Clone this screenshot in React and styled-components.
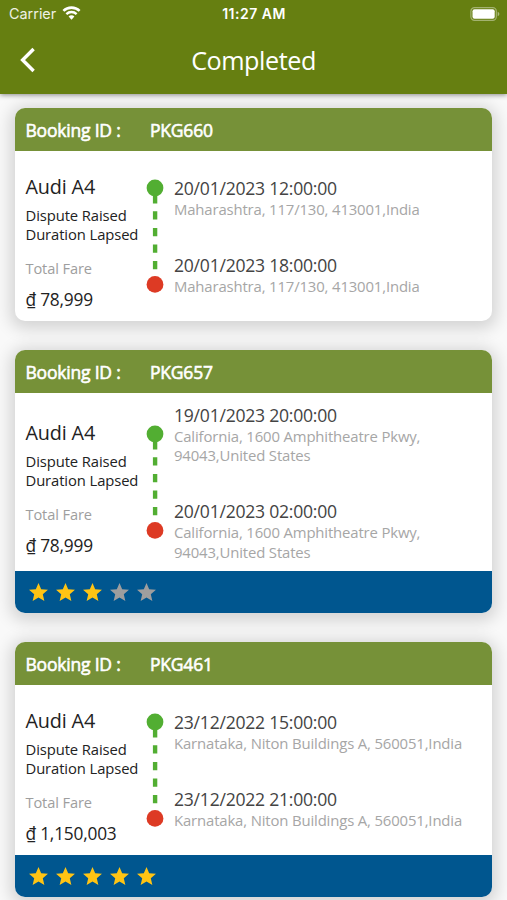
import React from "react";
import styled, { createGlobalStyle } from "styled-components";

const bookings = [
  {
    id: "PKG660",
    car: "Audi A4",
    fare: "78,999",
    address: "Maharashtra, 117/130, 413001,India",
    start: "20/01/2023 12:00:00",
    end: "20/01/2023 18:00:00",
  },
  {
    id: "PKG657",
    car: "Audi A4",
    fare: "78,999",
    address: "California, 1600 Amphitheatre Pkwy, 94043,United States",
    start: "19/01/2023 20:00:00",
    end: "20/01/2023 02:00:00",
    rating: 3,
    tall: true,
  },
  {
    id: "PKG461",
    car: "Audi A4",
    fare: "1,150,003",
    address: "Karnataka, Niton Buildings A, 560051,India",
    start: "23/12/2022 15:00:00",
    end: "23/12/2022 21:00:00",
    rating: 5,
  },
];

const WifiIcon = () => (
  <svg width="19" height="14" viewBox="0 0 20 15">
    <path d="M1.3 5.3a12.4 12.4 0 0 1 17.4 0" fill="none" stroke="#fff" strokeWidth="2.7" />
    <path d="M4.5 8.7a7.9 7.9 0 0 1 11 0" fill="none" stroke="#fff" strokeWidth="2.5" />
    <path d="M10 14.6 6.9 11.3a4.3 4.3 0 0 1 6.2 0Z" fill="#fff" />
  </svg>
);

const BatteryIcon = () => (
  <svg width="31" height="14" viewBox="0 0 31 14">
    <rect x="0.9" y="0.7" width="25.4" height="12.6" rx="3.6" fill="none" stroke="#fff" strokeOpacity="0.4" strokeWidth="1.2" />
    <rect x="2.5" y="2.3" width="22.2" height="9.4" rx="2" fill="#fff" />
    <path d="M27.7 4.8c2.2.8 2.2 3.6 0 4.4Z" fill="#fff" fillOpacity="0.45" />
  </svg>
);

const BackIcon = () => (
  <svg width="17" height="26" viewBox="0 0 17 26">
    <path d="M14.6 2 3.6 13l11 11" fill="none" stroke="#fff" strokeWidth="3.4" />
  </svg>
);

const Star = ({ filled }) => (
  <svg width="19" height="18" viewBox="2 2 20 19">
    <path
      d="M12 17.27 18.18 21l-1.64-7.03L22 9.24l-7.19-.61L12 2 9.19 8.63 2 9.24l5.46 4.73L5.82 21z"
      fill={filled ? "#ffc414" : "#9e9e9e"}
    />
  </svg>
);

const Route = () => (
  <svg width="18" height="114" viewBox="0 0 18 114">
    <path d="M9.1 9V24.4M9.1 32.3v8.2M9.1 49v8.2M9.1 65.5v8.2M9.1 82v8.2" stroke="#52ae32" strokeWidth="4.4" />
    <circle cx="9" cy="9" r="8.4" fill="#52ae32" />
    <circle cx="9" cy="105.4" r="8.4" fill="#dd3a24" />
  </svg>
);

const BookingCard = ({ booking }) => (
  <Card>
    <CardHeader>
      <Label>Booking ID :</Label>
      <span>{booking.id}</span>
    </CardHeader>
    <CardBody $tall={booking.tall}>
      <Summary>
        <CarName>{booking.car}</CarName>
        <Status>
          Dispute Raised
          <br />
          Duration Lapsed
        </Status>
        <FareLabel>Total Fare</FareLabel>
        <Fare>₫ {booking.fare}</Fare>
      </Summary>
      <Route />
      <Stops>
        <div>
          <StopDate>{booking.start}</StopDate>
          <Address>{booking.address}</Address>
        </div>
        <div>
          <StopDate>{booking.end}</StopDate>
          <Address>{booking.address}</Address>
        </div>
      </Stops>
    </CardBody>
    {booking.rating && (
      <Rating>
        {[1, 2, 3, 4, 5].map((n) => (
          <Star key={n} filled={n <= booking.rating} />
        ))}
      </Rating>
    )}
  </Card>
);

export const App = () => {
  return (
    <Screen>
      <GlobalStyle />
      <Header>
        <StatusBar>
          <Carrier>
            Carrier <WifiIcon />
          </Carrier>
          <Time>11:27 AM</Time>
          <BatteryIcon />
        </StatusBar>
        <NavBar>
          <BackIcon />
          <Title>Completed</Title>
        </NavBar>
      </Header>
      <List>
        {bookings.map((booking) => (
          <BookingCard key={booking.id} booking={booking} />
        ))}
      </List>
    </Screen>
  );
};

const GlobalStyle = createGlobalStyle`
  * {
    box-sizing: border-box;
  }
  body {
    margin: 0;
    overflow: hidden;
  }
  svg {
    display: block;
    flex-shrink: 0;
  }
`;

const Screen = styled.div`
  height: 900px;
  overflow: hidden;
  display: flex;
  flex-direction: column;
  background: #f9f9f9;
  font-family: "Open Sans", "Noto Sans", sans-serif;
`;

const Header = styled.header`
  height: 94px;
  flex-shrink: 0;
  background: #667f11;
  color: #fff;
  box-shadow: 0 1px 5px rgba(0, 0, 0, 0.45);
  z-index: 1;
`;

const StatusBar = styled.div`
  height: 27px;
  padding: 0 6px 0 9px;
  display: grid;
  grid-template-columns: 1fr auto 1fr;
  align-items: center;
  font-family: Inter, sans-serif;

  > svg {
    justify-self: end;
  }
`;

const Carrier = styled.div`
  display: flex;
  align-items: center;
  gap: 6px;
  font-size: 14.4px;
  color: #eef1e4;

  svg {
    margin-top: -2px;
  }
`;

const Time = styled.div`
  margin-right: 2px;
  font-size: 14px;
  font-weight: 600;
  letter-spacing: 0.5px;
`;

const NavBar = styled.div`
  height: 65px;
  padding: 0 19px;
  display: grid;
  grid-template-columns: 17px 1fr 17px;
  align-items: center;
`;

const Title = styled.h1`
  margin: 0;
  font-size: 25.2px;
  font-weight: 400;
  letter-spacing: -0.45px;
  text-align: center;
`;

const List = styled.main`
  padding: 14px 15px 0;
  display: flex;
  flex-direction: column;
  gap: 29px;
`;

const Card = styled.section`
  flex-shrink: 0;
  border-radius: 10px;
  box-shadow: 0 3px 16px 5px rgba(0, 0, 0, 0.15);
  background: #fff;
  overflow: hidden;
`;

const CardHeader = styled.div`
  height: 43px;
  padding: 1px 10.5px 0;
  display: flex;
  align-items: center;
  background: #769138;
  color: #fff;
  font-size: 17.5px;
  letter-spacing: -0.2px;
  -webkit-text-stroke: 0.6px #fff;
`;

const Label = styled.span`
  width: 124.5px;
`;

const CardBody = styled.div`
  height: ${({ $tall }) => ($tall ? "178px" : "170px")};
  padding-left: 10.5px;
  display: flex;
  align-items: center;
`;

const Summary = styled.div`
  width: 120.5px;
  padding-top: 12.5px;
  color: #222;
  white-space: nowrap;
`;

const CarName = styled.div`
  font-size: 19.8px;
  line-height: 27px;
  letter-spacing: -0.15px;
`;

const Status = styled.div`
  margin-top: 5.5px;
  font-size: 14.8px;
  line-height: 19.5px;
  letter-spacing: -0.1px;
`;

const FareLabel = styled.div`
  margin-top: 14.5px;
  color: #9e9e9e;
  font-size: 14.6px;
  line-height: 19.5px;
  letter-spacing: -0.1px;
`;

const Fare = styled.div`
  margin-top: 9.5px;
  font-size: 17.3px;
  line-height: 23px;
  letter-spacing: -0.2px;
`;

const Stops = styled.div`
  margin-left: 10px;
  padding-top: 1.5px;
  width: 300px;
  display: flex;
  flex-direction: column;
  gap: 34.5px;
`;

const StopDate = styled.div`
  color: #444;
  font-size: 17.6px;
  line-height: 23px;
  letter-spacing: -0.25px;
`;

const Address = styled.div`
  color: #a6a6a6;
  font-size: 14.9px;
  line-height: 19.5px;
  letter-spacing: -0.15px;
`;

const Rating = styled.div`
  height: 42px;
  padding-left: 14px;
  display: flex;
  align-items: center;
  gap: 8px;
  background: #00568f;
`;

export default App;
